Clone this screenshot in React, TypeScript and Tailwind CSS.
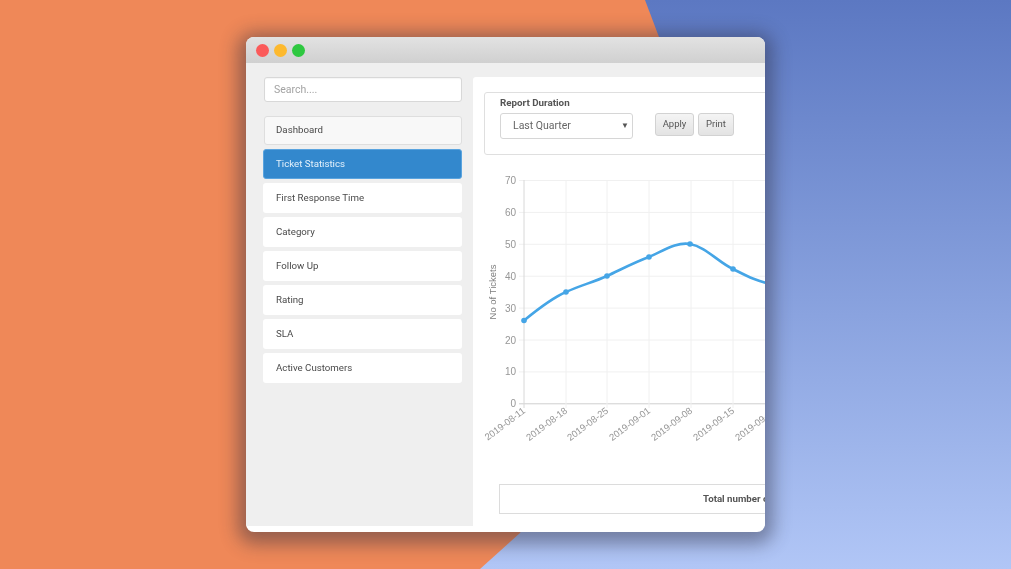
const items = ["First Response Time", "Category", "Follow Up", "Rating", "SLA", "Active Customers"];
const yTicks = [70, 60, 50, 40, 30, 20, 10, 0];
const xs = [524, 566, 607, 649, 691, 733];
const dates = ["2019-08-11", "2019-08-18", "2019-08-25", "2019-09-01", "2019-09-08", "2019-09-15", "2019-09-22"];
const pts: [number, number][] = [[524, 320.5], [566, 292], [607, 276], [649, 257], [690, 244], [733, 269]];

function Chart() {
  return (
    <svg width="292" height="329" viewBox="473 155 292 329" className="block shrink-0">
      {yTicks.map((t, i) => {
        const y = 180.5 + i * 31.9;
        return (
          <g key={t}>
            <line x1="519" x2="765" y1={y} y2={y} stroke={t === 0 ? "#cfcfcf" : "#f0f0f0"} />
            <text x="516" y={y + 3.5} textAnchor="end" fontSize="10" fill="#969696" fontFamily="Liberation Sans, sans-serif">{t}</text>
          </g>
        );
      })}
      {[...xs, 775].map((x, i) => (
        <line key={x} x1={x} x2={x} y1="180" y2="408" stroke={i === 0 ? "#d8d8d8" : "#f0f0f0"} />
      ))}
      {dates.map((d, i) => {
        const x = [...xs, 775][i] + 2;
        return (
          <text key={d} x={x} y="412" textAnchor="end" fontSize="9.5" fill="#969696" fontFamily="Liberation Sans, sans-serif" transform={`rotate(-37 ${x} 412)`}>{d}</text>
        );
      })}
      <text x="495.5" y="292" textAnchor="middle" fontSize="9.5" fill="#7c7c7c" fontFamily="Liberation Sans, sans-serif" transform="rotate(-90 495.5 292)">No of Tickets</text>
      <path
        d="M524,320.5 C538,309 552,298 566,292 C580,285.5 594,282 607,276 C621,269.5 635,262 649,257 C663,251 677,241.5 690,244 C706,247 718,262 733,269 C745,275 755,281 775,285"
        fill="none"
        stroke="#45a5e6"
        strokeWidth="2.6"
      />
      {pts.map(([x, y]) => <circle key={x} cx={x} cy={y} r="2.8" fill="#45a5e6" />)}
    </svg>
  );
}

export default function App() {
  return (
    <div className="relative w-[1011px] h-[569px] overflow-hidden bg-gradient-to-b from-[#5c78c2] to-[#b1c6f6] font-['Roboto',sans-serif]">
      <div className="absolute inset-0 bg-[#ef8858] [clip-path:polygon(0_0,645px_0,662px_45px,660px_300px,520px_533px,480px_569px,0_569px)]" />
      <div className="absolute left-[246px] top-[37px] w-[519px] h-[495px] rounded-[8px] overflow-hidden bg-white shadow-[0_4px_18px_8px_rgba(45,45,65,0.46)] flex flex-col">
        <div className="h-[26px] shrink-0 bg-gradient-to-b from-[#e2e2e2] to-[#d0d0d0] flex items-center gap-[5px] pl-[10px]">
          <span className="w-[13px] h-[13px] rounded-full bg-[#fb5a5a]" />
          <span className="w-[13px] h-[13px] rounded-full bg-[#fdb92e]" />
          <span className="w-[13px] h-[13px] rounded-full bg-[#2ec840]" />
        </div>
        <div className="h-[463px] shrink-0 bg-[#efefef] flex blur-[0.35px]">
          <div className="w-[227px] shrink-0 pl-[17px] pr-[11px] pt-[14px]">
            <div className="ml-[1px] h-[25px] bg-white border border-[#d8d8d8] rounded-[3px] flex items-center pl-[9px] text-[10.5px] text-[#a3a3a3] shadow-[inset_0_1px_1px_rgba(0,0,0,0.04)]">Search....</div>
            <div className="mt-[14px] flex flex-col gap-[4px]">
              <div className="ml-[1px] h-[29px] bg-[#f8f8f8] border border-[#dedede] rounded-[3px] flex items-center pl-[11px] text-[9.7px] text-[#4a4a4a]">Dashboard</div>
              <div className="h-[30px] bg-[#3388cd] border border-[#5aa4df] rounded-[3px] flex items-center pl-[12px] text-[9.7px] text-[#e4f1fb]">Ticket Statistics</div>
              {items.map((t) => (
                <div key={t} className="h-[30px] bg-white rounded-[3px] flex items-center pl-[13px] text-[9.7px] text-[#4a4a4a]">{t}</div>
              ))}
            </div>
          </div>
          <div className="mt-[14px] flex-1 min-w-0 bg-white overflow-hidden rounded-tl-[3px]">
            <div className="mt-[15px] ml-[11px] w-[400px] h-[63px] border border-[#dfdfdf] rounded-[3px] pl-[15px] pt-[3px]">
              <div className="text-[9.8px] leading-[14px] font-bold text-[#555]">Report Duration</div>
              <div className="mt-[3px] flex items-start">
                <div className="w-[133px] h-[26px] bg-white border border-[#d6d6d6] rounded-[3px] flex items-center justify-between pl-[12px] pr-[3px] text-[10.5px] text-[#666]">
                  <span>Last Quarter</span>
                  <span className="text-[8px] text-[#555]">▼</span>
                </div>
                <div className="ml-[22px] w-[39px] h-[23px] bg-gradient-to-b from-[#f4f4f4] to-[#e3e3e3] border border-[#d2d2d2] rounded-[3px] flex items-center justify-center text-[9.5px] text-[#555]">Apply</div>
                <div className="ml-[4px] w-[36px] h-[23px] bg-gradient-to-b from-[#f4f4f4] to-[#e3e3e3] border border-[#d2d2d2] rounded-[3px] flex items-center justify-center text-[9.5px] text-[#555]">Print</div>
              </div>
            </div>
            <Chart />
            <div className="ml-[26px] w-[500px] h-[30px] border border-[#dcdcdc] flex items-center pl-[203px] text-[9.7px] font-bold text-[#555] whitespace-nowrap">Total number of tickets</div>
          </div>
        </div>
      </div>
    </div>
  );
}
